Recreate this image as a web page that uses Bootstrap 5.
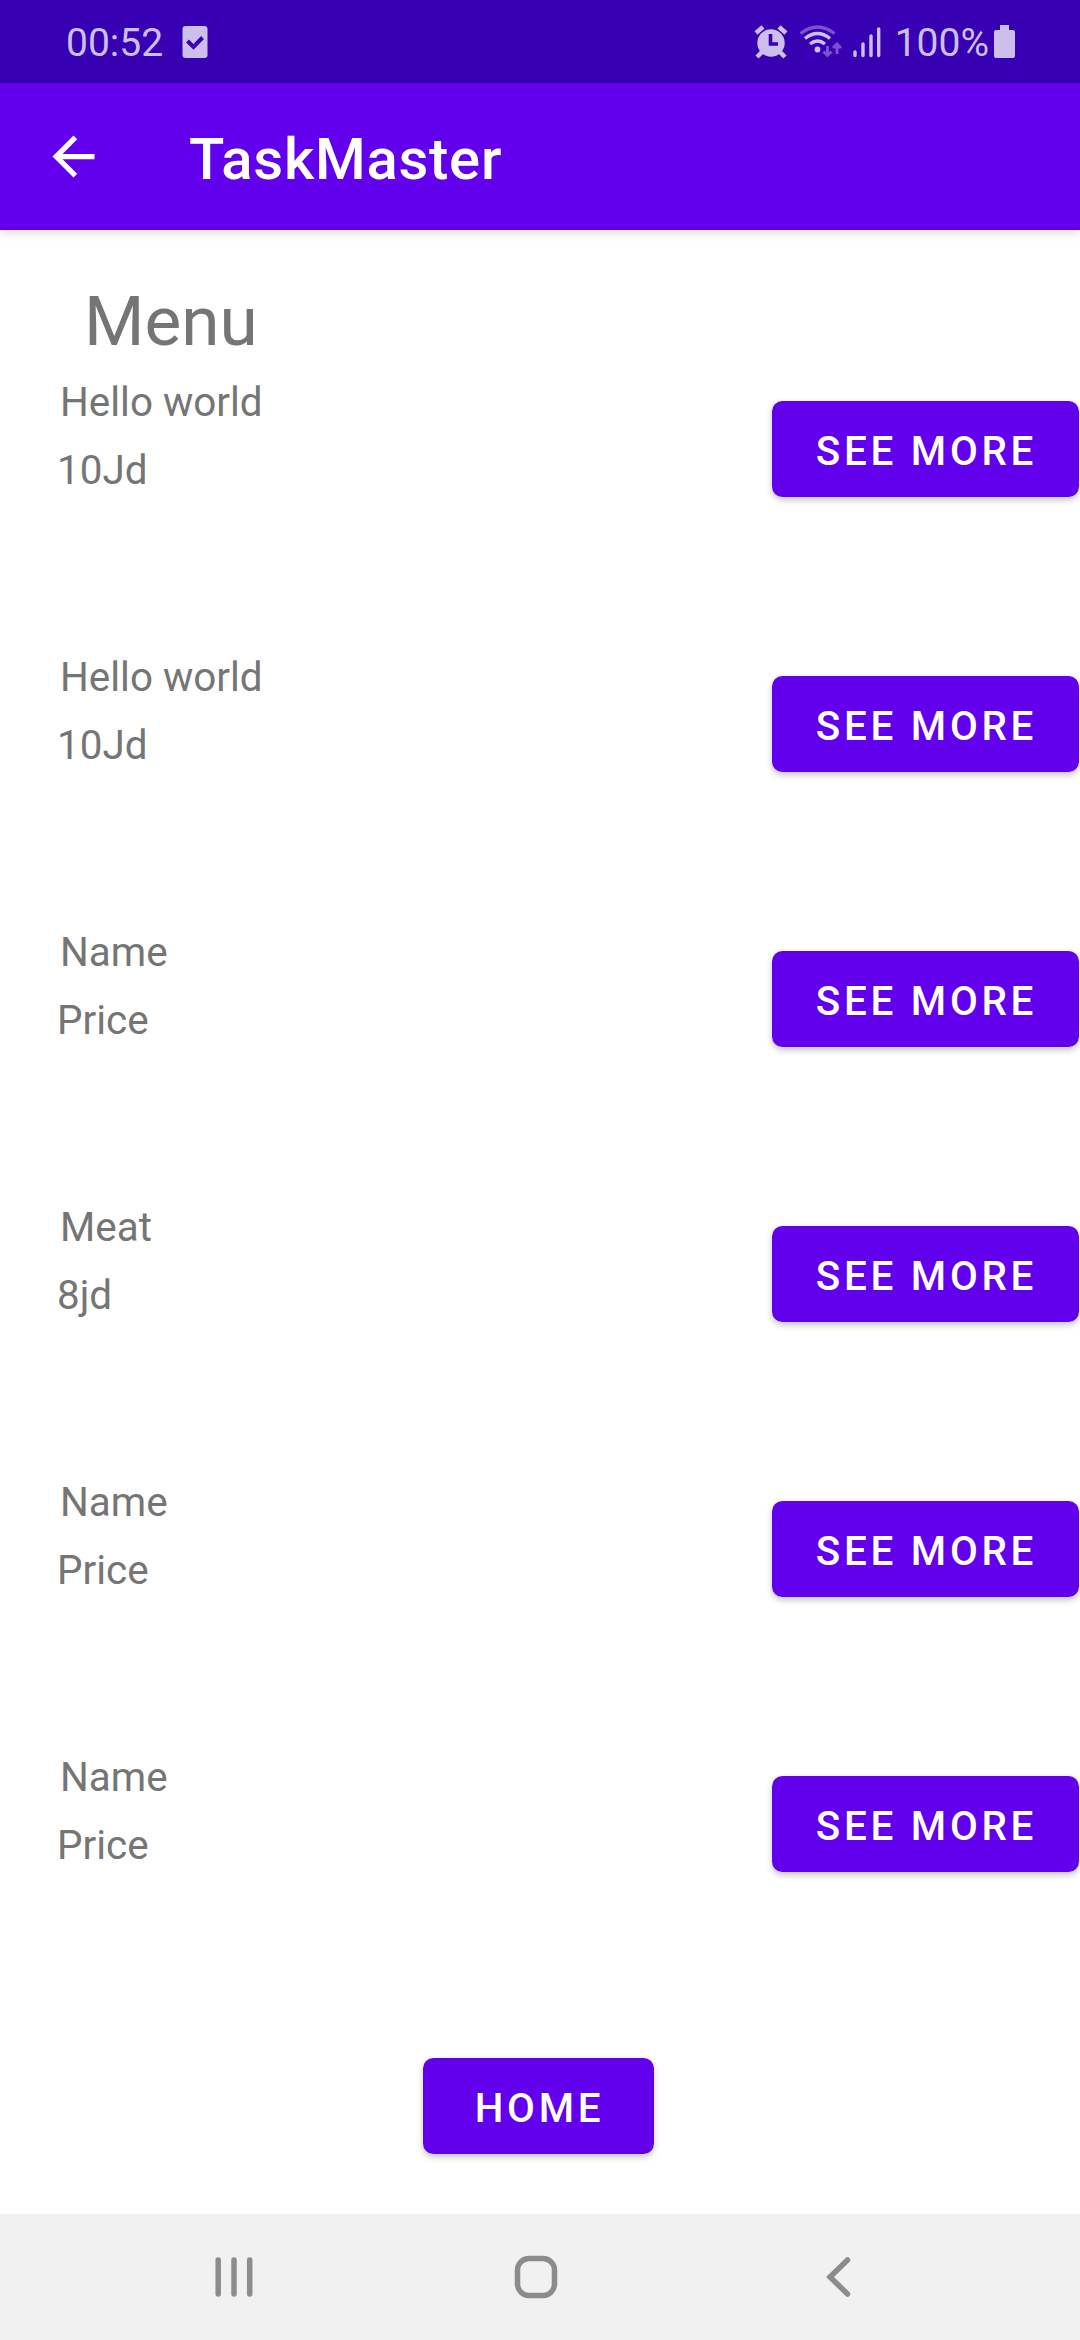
<!DOCTYPE html>
<html lang="en">
<head>
<meta charset="utf-8">
<meta name="viewport" content="width=device-width, initial-scale=1">
<title>TaskMaster</title>
<link href="https://cdn.jsdelivr.net/npm/bootstrap@5.3.0/dist/css/bootstrap.min.css" rel="stylesheet">
<style>
  body { font-family: Roboto, "Noto Sans", sans-serif; color: #757575; }
  svg { display: block; flex: none; }
  .screen { width: 1080px; height: 2340px; overflow: hidden; }
  .status-bar { height: 83px; background: #3700b3; color: #ccbfec; font-size: 39px; line-height: 46px; padding: 0 62px 0 66px; }
  .clock-text { margin-top: 2px; }
  .percent-text { margin: 2px 2px 0 -1px; }
  .app-bar { height: 147px; padding: 0 0 0 42px; background: #6200ee; box-shadow: 0 2px 10px rgba(0,0,0,.16); z-index: 1; }
  .app-title { font-size: 58px; line-height: 68px; font-weight: 500; letter-spacing: .75px; margin: 5px 0 0 84px; padding: 0; color: #fff; }
  .menu-title { font-size: 69.3px; line-height: 80px; font-weight: 400; margin: 52px 0 0 84px; color: inherit; }
  .menu-row { height: 275px; padding: 17px 1px 0 57px; }
  .item-text { font-size: 40.4px; line-height: 48px; }
  .item-name { padding-left: 3px; }
  .item-price { margin-top: 20px; }
  .btn-raised { --bs-btn-color: #fff; --bs-btn-bg: #6200ee; --bs-btn-border-width: 0; --bs-btn-hover-bg: #6200ee; --bs-btn-hover-color: #fff;
    --bs-btn-border-radius: 10.5px; --bs-btn-font-size: 40.4px; --bs-btn-line-height: 48px; --bs-btn-font-weight: 500;
    --bs-btn-padding-x: 0; --bs-btn-padding-y: 0;
    height: 96px; padding-top: 5px; padding-left: 2px; letter-spacing: .092em; box-shadow: 0 3px 6px rgba(0,0,0,.24); }
  .btn-more { width: 307px; margin-top: 22px; }
  .btn-home { width: 231px; margin: 46px 0 0 423px; }
  .nav-keys { height: 126px; background: #f1f1f1; }
</style>
</head>
<body class="bg-white">
<div class="screen d-flex flex-column">
  <header class="status-bar d-flex align-items-center justify-content-between flex-shrink-0">
    <div class="d-flex align-items-center">
      <span class="clock-text">00:52</span>
      <svg class="ms-3" width="30" height="34" viewBox="0 0 30 34"><rect x="3.500" y="1" width="25" height="32" rx="3" fill="#ccbfec"/><path d="M8.500 16l6 6 9-9.500" fill="none" stroke="#3700b3" stroke-width="4"/></svg>
    </div>
    <div class="d-flex align-items-center">
      <svg width="142" height="34" viewBox="0 0 142 34" fill="none" stroke="#ccbfec">
        <circle cx="17" cy="18" r="13.700" fill="#ccbfec" stroke="none"/>
        <path d="M2 8l7-6M25 2l7 6M8 27l-5 5M26 27l5 5" stroke-width="4.500"/>
        <path d="M16.500 9v10H24" stroke="#3700b3" stroke-width="3.600"/>
        <g stroke-width="3.400">
          <path d="M46.500 8.500Q63.500-4.500 80.500 8.500" stroke="#7b52cb"/>
          <path d="M51 13.500Q63.500 3.500 76 13.500M56 19Q63.500 13 71 19"/>
        </g>
        <circle cx="63.500" cy="24.500" r="2.900" fill="#ccbfec" stroke="none"/>
        <g stroke="#7b52cb" stroke-width="3"><path d="M73.500 21v9M69.500 26.500l4 4 4-4M83 29V20M79 23l4-4 4 4"/></g>
        <path d="M101 27v3.500M109 19v11.500M117 11v19.500M124.700 4v26.500" stroke-width="3.400" stroke-linecap="round"/>
      </svg>
      <span class="percent-text">100%</span>
      <svg width="27" height="34" viewBox="0 0 27 34"><path d="M9 0h9v5h4q2 0 2 2v24q0 2-2 2H5q-2 0-2-2V7q0-2 2-2h4z" fill="#ccbfec"/></svg>
    </div>
  </header>
  <nav class="navbar app-bar flex-nowrap justify-content-start flex-shrink-0">
    <svg width="63" height="63" viewBox="0 0 24 24" fill="#fff"><path d="M20 11H7.830l5.590-5.590L12 4l-8 8 8 8 1.410-1.410L7.830 13H20z"/></svg>
    <span class="navbar-brand app-title">TaskMaster</span>
  </nav>
  <main class="flex-grow-1">
    <h1 class="menu-title">Menu</h1>
    <section>
      <div class="menu-row d-flex justify-content-between align-items-start"><div class="item-text"><div class="item-name">Hello world</div><div class="item-price">10Jd</div></div><button class="btn btn-raised btn-more">SEE MORE</button></div>
      <div class="menu-row d-flex justify-content-between align-items-start"><div class="item-text"><div class="item-name">Hello world</div><div class="item-price">10Jd</div></div><button class="btn btn-raised btn-more">SEE MORE</button></div>
      <div class="menu-row d-flex justify-content-between align-items-start"><div class="item-text"><div class="item-name">Name</div><div class="item-price">Price</div></div><button class="btn btn-raised btn-more">SEE MORE</button></div>
      <div class="menu-row d-flex justify-content-between align-items-start"><div class="item-text"><div class="item-name">Meat</div><div class="item-price">8jd</div></div><button class="btn btn-raised btn-more">SEE MORE</button></div>
      <div class="menu-row d-flex justify-content-between align-items-start"><div class="item-text"><div class="item-name">Name</div><div class="item-price">Price</div></div><button class="btn btn-raised btn-more">SEE MORE</button></div>
      <div class="menu-row d-flex justify-content-between align-items-start"><div class="item-text"><div class="item-name">Name</div><div class="item-price">Price</div></div><button class="btn btn-raised btn-more">SEE MORE</button></div>
    </section>
    <button class="btn btn-raised btn-home">HOME</button>
  </main>
  <footer class="nav-keys flex-shrink-0">
    <svg width="1080" height="126" viewBox="0 0 1080 126" fill="none" stroke="#8c8c8c" stroke-width="5.500">
      <path d="M218.200 46v34M234 46v34M249.700 46v34" stroke-linecap="round"/>
      <rect x="517.500" y="44.500" width="37" height="37" rx="11.500"/>
      <path d="M847.500 46L830 63l17.500 17" stroke-linecap="round"/>
    </svg>
  </footer>
</div>
<script src="https://cdn.jsdelivr.net/npm/bootstrap@5.3.0/dist/js/bootstrap.bundle.min.js"></script>
</body>
</html>
